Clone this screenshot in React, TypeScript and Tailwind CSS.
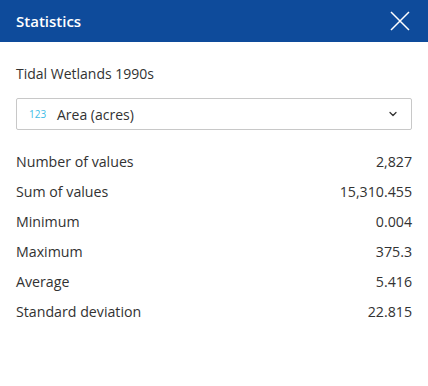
import { ChevronDown } from "lucide-react";

const stats = [
  { label: "Number of values", value: "2,827" },
  { label: "Sum of values", value: "15,310.455" },
  { label: "Minimum", value: "0.004" },
  { label: "Maximum", value: "375.3" },
  { label: "Average", value: "5.416" },
  { label: "Standard deviation", value: "22.815" },
];

export default function App() {
  return (
    <div
      className="w-[428px] h-[386px] bg-white text-[#323232]"
      style={{ fontFamily: '"Open Sans", "Noto Sans", sans-serif' }}
    >
      <header className="h-[42px] bg-[#0e4b9b] flex items-center justify-between pl-4 pr-[18px]">
        <h1 className="text-white text-[15px] font-semibold">Statistics</h1>
        <svg width="20" height="20" viewBox="0 0 20 20" className="text-white">
          <path d="M1 1 L19 19 M19 1 L1 19" stroke="currentColor" strokeWidth="1.5" fill="none" />
        </svg>
      </header>

      <div className="px-4 pt-[22px]">
        <p className="text-[14px] leading-[20px]">Tidal Wetlands 1990s</p>

        <div className="mt-[14px] h-[32px] border border-[#c8c8c8] rounded-[2px] flex items-center pl-3 pr-3">
          <span className="text-[10px] text-[#3fbde6] w-[28px]">123</span>
          <span className="text-[14px] flex-1">Area (acres)</span>
          <ChevronDown className="w-[12px] h-[12px] text-[#323232]" strokeWidth={2.5} />
        </div>

        <div className="mt-[17px] flex flex-col">
          {stats.map((s) => (
            <div key={s.label} className="h-[30px] flex items-center justify-between text-[14.2px]">
              <span>{s.label}</span>
              <span>{s.value}</span>
            </div>
          ))}
        </div>
      </div>
    </div>
  );
}
